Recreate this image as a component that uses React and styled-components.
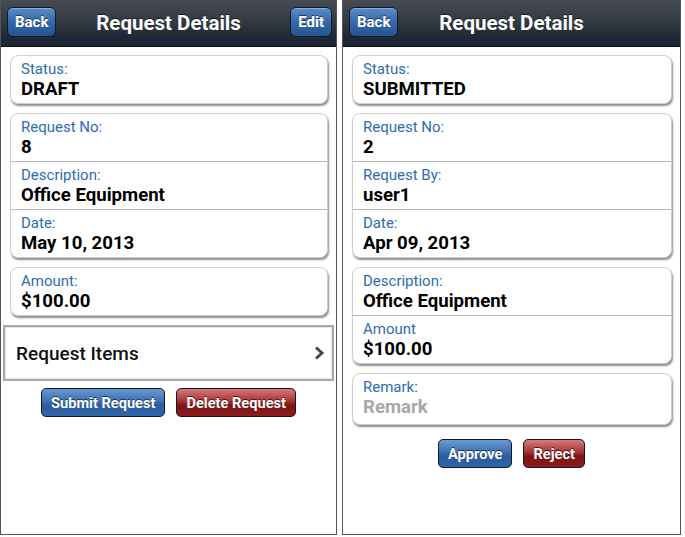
import React from 'react';
import styled, { createGlobalStyle } from 'styled-components';

const Global = createGlobalStyle`
  body {
    margin: 0;
    background: #fff;
    font-family: Roboto, "Liberation Sans", Arial, sans-serif;
  }
`;

const Screen = styled.div`
  display: flex;
  gap: 5px;
  width: 685px;
  height: 537px;
`;

const Panel = styled.div`
  width: ${(p) => p.w}px;
  height: ${(p) => p.h}px;
  box-sizing: border-box;
  border: 1px solid #555;
  border-top: none;
  background: #fff;
  display: flex;
  flex-direction: column;
`;

const Header = styled.div`
  position: relative;
  height: 46px;
  flex-shrink: 0;
  display: flex;
  align-items: center;
  justify-content: center;
  background: linear-gradient(#474c53 0%, #30363e 55%, #1d2838 80%, #1a2535 100%);
  border-bottom: 1px solid #111;
`;

const Title = styled.h1`
  margin: 0;
  color: #fff;
  font-size: 20.5px;
  font-weight: 700;
  text-shadow: 0 -1px 0 rgba(0, 0, 0, 0.6);
`;

const HeaderButton = styled.button`
  position: absolute;
  top: 7px;
  ${(p) => (p.right ? 'right: 4px;' : 'left: 6px;')}
  height: 30px;
  padding: 0 7px;
  border: 1px solid #0d1a2c;
  border-radius: 6px;
  background: linear-gradient(#5a8cc8 0%, #3569a8 50%, #24548f 100%);
  box-shadow: inset 0 1px 0 rgba(255, 255, 255, 0.3);
  color: #fff;
  font-family: inherit;
  font-size: 15px;
  font-weight: 700;
  text-shadow: 0 -1px 0 rgba(0, 0, 0, 0.5);
`;

const Content = styled.div`
  display: flex;
  flex-direction: column;
  gap: 9px;
  padding: 8px 8px 0 9px;
`;

const Card = styled.div`
  background: #fff;
  border: 1px solid #d0d0d0;
  border-radius: 8px;
  box-shadow: 1px 2px 2px rgba(0, 0, 0, 0.45);
  overflow: hidden;
`;

const Row = styled.div`
  padding: 4px 10px 0;
  height: ${(p) => p.h || 43}px;
  & + & {
    border-top: 1px solid #b8b8b8;
  }
`;

const Label = styled.div`
  color: #2e6cb2;
  font-size: 15px;
  line-height: 18px;
`;

const Value = styled.div`
  color: ${(p) => (p.placeholder ? '#a8a8a8' : '#000')};
  font-size: 18.6px;
  font-weight: 700;
  line-height: 23px;
`;

const ItemsLink = styled.div`
  display: flex;
  align-items: center;
  justify-content: space-between;
  height: 56px;
  box-sizing: border-box;
  margin: 0 -6px 0 -7px;
  padding: 0 6px 0 11px;
  border: 2px solid #a9a9a9;
  box-shadow: inset 0 0 0 1px #e6e6e6;
  font-size: 19px;
  font-weight: 500;
  color: #111;
`;

const Actions = styled.div`
  display: flex;
  justify-content: center;
  gap: 11px;
  margin-top: ${(p) => p.top}px;
`;

const ActionButton = styled.button`
  height: 29px;
  padding: 0 9px;
  border: 1px solid #121a26;
  border-radius: 5px;
  background: ${(p) =>
    p.danger
      ? 'linear-gradient(#d87a7a 0%, #a83232 45%, #7c1414 60%, #8a1c1c 100%)'
      : 'linear-gradient(#6a9ad3 0%, #3d70b0 45%, #2a5c9e 60%, #2f65a8 100%)'};
  color: #fff;
  font-family: inherit;
  font-size: 14.6px;
  font-weight: 700;
  text-shadow: 0 -1px 0 rgba(0, 0, 0, 0.6);
`;

const Chevron = () => (
  <svg width="14" height="18" viewBox="0 0 14 18">
    <path d="M4 3.5 L10 9 L4 14.5" fill="none" stroke="#484848" strokeWidth="3" />
  </svg>
);

const Field = ({ label, value, placeholder, h }) => (
  <Row h={h}>
    <Label>{label}</Label>
    <Value placeholder={placeholder}>{value}</Value>
  </Row>
);

export default function App() {
  return (
    <>
      <Global />
      <Screen>
        <Panel w={337} h={535}>
          <Header>
            <HeaderButton>Back</HeaderButton>
            <Title>Request Details</Title>
            <HeaderButton right>Edit</HeaderButton>
          </Header>
          <Content>
            <Card>
              <Field label="Status:" value="DRAFT" />
            </Card>
            <Card>
              <Field label="Request No:" value="8" />
              <Field label="Description:" value="Office Equipment" />
              <Field label="Date:" value="May 10, 2013" />
            </Card>
            <Card>
              <Field label="Amount:" value="$100.00" />
            </Card>
            <ItemsLink>
              Request Items
              <Chevron />
            </ItemsLink>
          </Content>
          <Actions top={7}>
            <ActionButton>Submit Request</ActionButton>
            <ActionButton danger>Delete Request</ActionButton>
          </Actions>
        </Panel>
        <Panel w={339} h={535}>
          <Header>
            <HeaderButton>Back</HeaderButton>
            <Title>Request Details</Title>
          </Header>
          <Content>
            <Card>
              <Field label="Status:" value="SUBMITTED" />
            </Card>
            <Card>
              <Field label="Request No:" value="2" />
              <Field label="Request By:" value="user1" />
              <Field label="Date:" value="Apr 09, 2013" />
            </Card>
            <Card>
              <Field label="Description:" value="Office Equipment" />
              <Field label="Amount" value="$100.00" />
            </Card>
            <Card>
              <Field label="Remark:" value="Remark" placeholder h={46} />
            </Card>
          </Content>
          <Actions top={14}>
            <ActionButton>Approve</ActionButton>
            <ActionButton danger>Reject</ActionButton>
          </Actions>
        </Panel>
      </Screen>
    </>
  );
}
